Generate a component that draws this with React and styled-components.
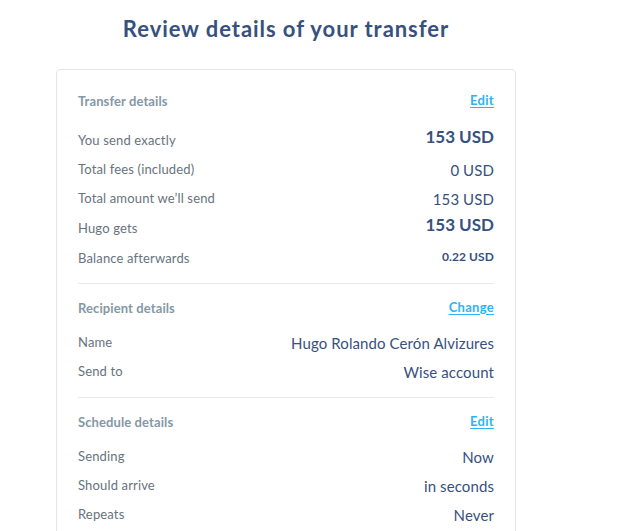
import React from "react";
import styled, { createGlobalStyle } from "styled-components";

const Global = createGlobalStyle`
  html, body { margin: 0; padding: 0; background: #ffffff; }
  body { font-family: Lato, "Noto Sans", "Liberation Sans", sans-serif; -webkit-font-smoothing: antialiased; }
`;

const Page = styled.div`
  width: 460px;
  margin-left: 56px;
`;

const Title = styled.h1`
  margin: 0;
  padding-top: 13px;
  height: 56px;
  box-sizing: border-box;
  text-align: center;
  font-size: 22px;
  line-height: 32px;
  font-weight: 700;
  color: #37517e;
  letter-spacing: 0.95px;
`;

const Card = styled.div`
  border: 1px solid #e3e7ea;
  border-radius: 4px;
  padding: 0 21px 40px 21px;
  margin-top: 13px;
  background: #fff;
`;

const Section = styled.section`
  padding: 14px 0 11px;
  border-top: 1px solid #e8ebed;
  &:first-child {
    padding-top: 21px;
    padding-bottom: 10px;
    border-top: none;
  }
`;

const Header = styled.div`
  display: flex;
  justify-content: space-between;
  align-items: center;
  height: 20px;
  line-height: 20px;
  margin-bottom: ${(p) => p.$gap || 10}px;
`;

const HeaderTitle = styled.span`
  font-size: 13px;
  font-weight: 700;
  color: #8598a6;
  letter-spacing: 0.1px;
`;

const Link = styled.a`
  font-size: 13px;
  font-weight: 700;
  color: #2cb4f3;
  text-decoration: underline;
  text-underline-offset: 2px;
  letter-spacing: 0.3px;
  cursor: pointer;
  position: relative;
  top: -1px;
`;

const Row = styled.div`
  display: flex;
  justify-content: space-between;
  align-items: center;
  height: ${(p) => (p.$tall ? 30 : 29)}px;
  line-height: 20px;
`;

const Label = styled.span`
  font-size: 13px;
  color: #68737d;
  letter-spacing: 0.15px;
`;

const sizes = { big: 17, normal: 15, small: 12 };
const shifts = { big: -3, normal: 1, small: -1 };

const Value = styled.span`
  font-size: ${(p) => sizes[p.$size || "normal"]}px;
  font-weight: ${(p) => (p.$size === "big" || p.$size === "small" ? 700 : 400)};
  color: #37517e;
  letter-spacing: ${(p) => (p.$size === "big" ? 0 : 0.1)}px;
  position: relative;
  top: ${(p) => shifts[p.$size || "normal"]}px;
`;

const sections = [
  {
    title: "Transfer details",
    action: "Edit",
    gap: 13.5,
    rows: [
      ["You send exactly", "153 USD", "big"],
      ["Total fees (included)", "0 USD", "normal"],
      ["Total amount we\u2019ll send", "153 USD", "normal"],
      ["Hugo gets", "153 USD", "big"],
      ["Balance afterwards", "0.22 USD", "small"],
    ],
  },
  {
    title: "Recipient details",
    action: "Change",
    rows: [
      ["Name", "Hugo Rolando Cerón Alvizures", "normal"],
      ["Send to", "Wise account", "normal"],
    ],
  },
  {
    title: "Schedule details",
    action: "Edit",
    rows: [
      ["Sending", "Now", "normal"],
      ["Should arrive", "in seconds", "normal"],
      ["Repeats", "Never", "normal"],
    ],
  },
];

export default function App() {
  return (
    <>
      <Global />
      <Page>
        <Title>Review details of your transfer</Title>
        <Card>
          {sections.map((s) => (
            <Section key={s.title}>
              <Header $gap={s.gap}>
                <HeaderTitle>{s.title}</HeaderTitle>
                <Link>{s.action}</Link>
              </Header>
              {s.rows.map(([l, v, size]) => (
                <Row key={l} $tall={size !== "normal"}>
                  <Label>{l}</Label>
                  <Value $size={size}>{v}</Value>
                </Row>
              ))}
            </Section>
          ))}
        </Card>
      </Page>
    </>
  );
}
